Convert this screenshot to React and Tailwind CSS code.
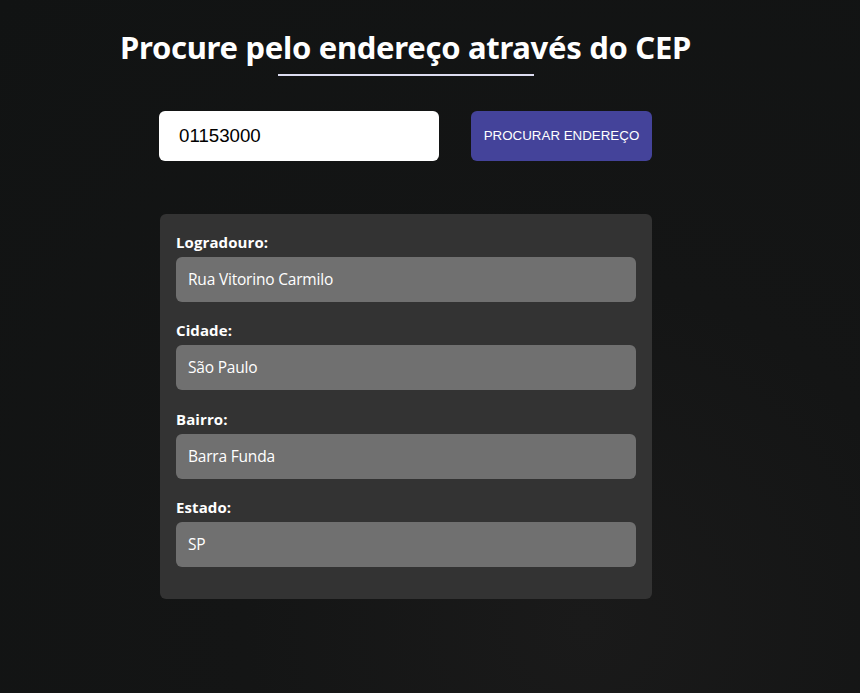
export default function App() {
  const fields = [
    ["Logradouro:", "Rua Vitorino Carmilo"],
    ["Cidade:", "São Paulo"],
    ["Bairro:", "Barra Funda"],
    ["Estado:", "SP"],
  ];
  return (
    <div className="min-h-[693px] w-full bg-[radial-gradient(circle_at_68%_90%,#1a1a1a_0%,#141515_40%,#111313_100%)] overflow-hidden">
      <div className="ml-[159px] w-[493px] pt-[27px]">
        <div className="flex justify-center">
          <h1 className="shrink-0 text-center text-white font-bold text-[31px] leading-[40px] tracking-[-0.3px] whitespace-nowrap" style={{ fontFamily: '"Noto Sans", "DejaVu Sans", sans-serif' }}>
            Procure pelo endereço através do CEP
          </h1>
        </div>
        <div className="mx-auto mt-[7px] h-[2px] w-[256px] bg-[#dcdcf0]" />
        <div className="mt-[35px] flex justify-between">
          <input
            defaultValue="01153000"
            className="h-[50px] w-[280px] rounded-[6px] bg-white px-[20px] text-[18.7px] text-black outline-none"
            style={{ fontFamily: '"Liberation Sans", Arial, sans-serif' }}
          />
          <button
            className="h-[50px] w-[181px] rounded-[6px] bg-[#44439a] text-white text-[13.333px]"
            style={{ fontFamily: '"Liberation Sans", Arial, sans-serif' }}
          >
            PROCURAR ENDEREÇO
          </button>
        </div>
        <div className="mt-[53px] ml-[1px] w-[492px] rounded-[6px] bg-[#333333] px-[16px] pt-[18px] pb-[32px]" style={{ fontFamily: '"Open Sans", "Noto Sans", sans-serif' }}>
          {fields.map(([label, value], i) => (
            <div key={label} className={i === 0 ? "" : "mt-[18.4px]"}>
              <div className="text-white font-bold text-[15px] leading-[20px] tracking-[0.1px]">{label}</div>
              <div className="mt-[5px] h-[45px] rounded-[6px] bg-[#707070] px-[12px] flex items-center text-white text-[15.5px] tracking-[-0.2px]">
                {value}
              </div>
            </div>
          ))}
        </div>
      </div>
    </div>
  );
}
